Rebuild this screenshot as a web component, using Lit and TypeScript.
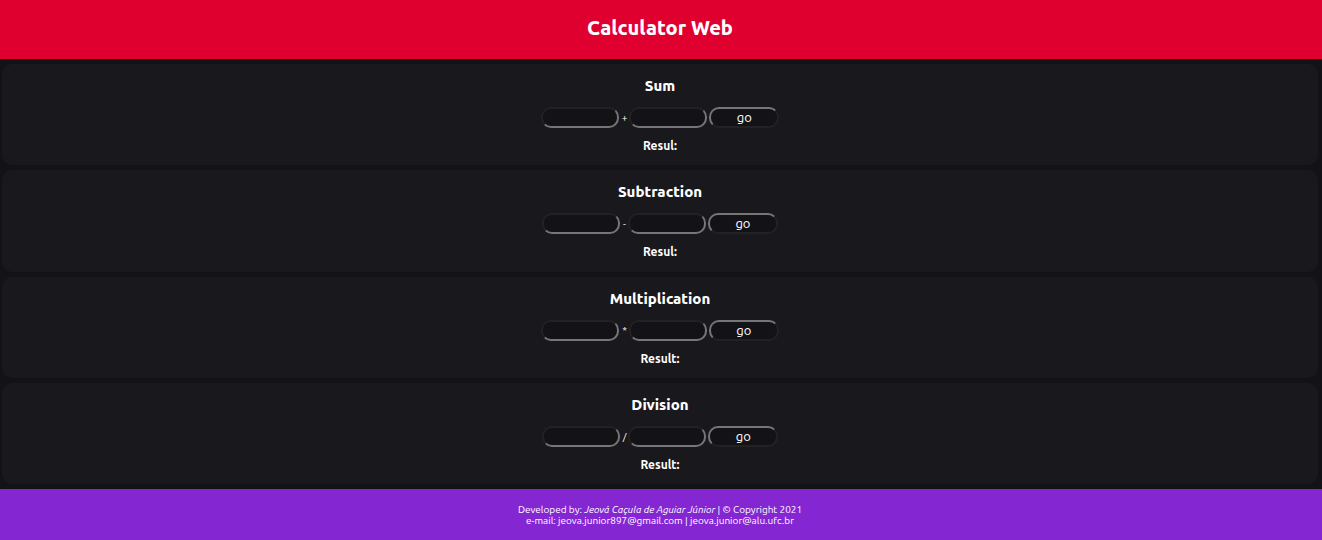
import { LitElement, html, css } from "lit";
import { customElement, property, state } from "lit/decorators.js";

@customElement("calc-card")
class CalcCard extends LitElement {
  @property() name = "";
  @property() operator = "+";
  @property() label = "Result:";
  @state() private result = "";

  static styles = css`
    :host {
      display: block;
      box-sizing: border-box;
      padding: 12px 10px 10px;
      border-radius: 10px;
      background: #19181d;
      text-align: center;
    }
    .title {
      margin: 0 0 12px;
      font-size: 15px;
      line-height: 19px;
      font-weight: 800;
    }
    .row {
      display: flex;
      justify-content: center;
      align-items: center;
      gap: 2px;
      margin: 0;
    }
    .field,
    .go {
      box-sizing: border-box;
      height: 21px;
      margin: 0;
      border: 2px solid;
      border-radius: 10px;
      background: #131217;
      color: #fff;
      font-family: inherit;
      font-size: 13px;
      line-height: 15px;
    }
    .field {
      width: 78px;
      padding: 0 6px;
      border-color: #222 #767676 #767676 #222;
    }
    .go {
      width: 70px;
      padding: 0;
      border-color: #767676 #222 #222 #767676;
    }
    .sign {
      padding: 1px 0 0 1px;
      font-size: 10px;
      line-height: 12px;
    }
    .result {
      display: block;
      margin-top: 11px;
      font-size: 12px;
      line-height: 14px;
      font-weight: 700;
    }
  `;

  private compute(e: Event) {
    e.preventDefault();
    const [a, b] = Array.from(this.renderRoot.querySelectorAll("input")).map((i) => Number(i.value));
    const value = { "+": a + b, "-": a - b, "*": a * b, "/": a / b }[this.operator];
    this.result = String(value);
  }

  render() {
    return html`
      <h2 class="title">${this.name}</h2>
      <form class="row" @submit=${this.compute}>
        <input class="field" id="first" aria-label="${this.name} first number" inputmode="decimal" />
        <span class="sign">${this.operator}</span>
        <input class="field" id="second" aria-label="${this.name} second number" inputmode="decimal" />
        <button class="go" type="submit">go</button>
      </form>
      <output class="result" for="first second">${this.label} ${this.result}</output>
    `;
  }
}

@customElement("app-root")
class AppRoot extends LitElement {
  static styles = css`
    :host {
      display: flex;
      flex-direction: column;
      min-height: 100vh;
      background: #131217;
      color: #fff;
      font-family: Ubuntu, "Noto Sans", sans-serif;
    }
    .header {
      padding: 14px 4px 17px 2px;
      background: #e00030;
      text-align: center;
    }
    .heading {
      margin: 0;
      font-size: 20px;
      line-height: 28px;
      font-weight: 800;
    }
    .cards {
      flex: 1;
      display: grid;
      grid-auto-rows: 1fr;
      gap: 5px;
      padding: 5px 4px 5px 2px;
    }
    .footer {
      padding: 15px 4px 14px 2px;
      background: #8526d3;
      text-align: center;
      font-size: 10px;
      line-height: 11px;
    }
    .line {
      margin: 0;
    }
  `;

  render() {
    return html`
      <header class="header"><h1 class="heading">Calculator Web</h1></header>
      <main class="cards">
        <calc-card name="Sum" operator="+" label="Resul:"></calc-card>
        <calc-card name="Subtraction" operator="-" label="Resul:"></calc-card>
        <calc-card name="Multiplication" operator="*"></calc-card>
        <calc-card name="Division" operator="/"></calc-card>
      </main>
      <footer class="footer">
        <p class="line">Developed by: <em>Jeová Caçula de Aguiar Júnior</em> | © Copyright 2021</p>
        <p class="line">e-mail: jeova.junior897@gmail.com | jeova.junior@alu.ufc.br</p>
      </footer>
    `;
  }
}
